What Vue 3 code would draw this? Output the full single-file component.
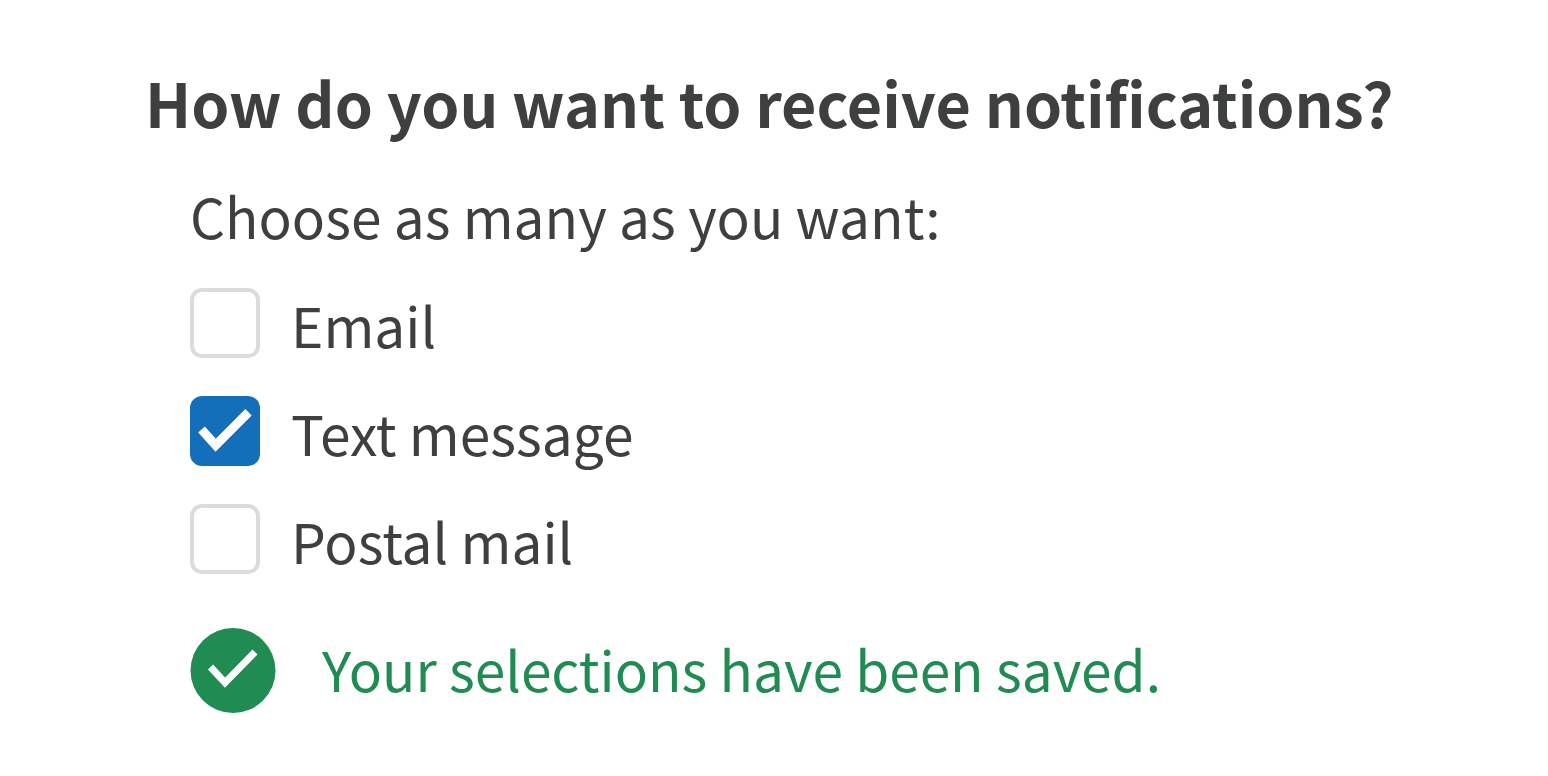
<script setup>
import { ref } from 'vue'

const options = [
  { id: 'email', label: 'Email' },
  { id: 'text', label: 'Text message' },
  { id: 'postal', label: 'Postal mail' },
]
const selected = ref(['text'])
</script>

<template>
  <main class="page">
    <form @submit.prevent>
      <h1 id="question">How do you want to receive notifications?</h1>
      <div class="body" role="group" aria-labelledby="question">
        <p class="hint">Choose as many as you want:</p>
        <ul class="options">
          <li v-for="o in options" :key="o.id" class="option">
            <span class="box">
              <input :id="o.id" v-model="selected" type="checkbox" :value="o.id" />
              <svg class="tick" viewBox="0 0 70 70" aria-hidden="true">
                <path d="M11.500 33.500 L25.700 49.200 L58.500 16.300" />
              </svg>
            </span>
            <label :for="o.id">{{ o.label }}</label>
          </li>
        </ul>
        <div class="status" role="status">
          <svg class="badge" viewBox="0 0 86 86" aria-hidden="true">
            <circle cx="43" cy="42.500" r="42.500" />
            <path d="M20.500 39 L35 54.600 L65 24" />
          </svg>
          <span>Your selections have been saved.</span>
        </div>
      </div>
    </form>
  </main>
</template>

<style>
body {
  background: #fff;
}
</style>

<style scoped>
.page {
  padding: 54px 145px 56px 145px;
  color: #3e3f3f;
  font-family: 'Noto Sans CJK SC', 'Noto Sans', sans-serif;
}
h1 {
  margin: 0;
  font-size: 61px;
  line-height: 96px;
  font-weight: 700;
}
.body {
  padding-left: 45px;
  font-size: 55px;
  line-height: 72px;
}
.hint {
  margin: 29px 0 37px;
}
.options {
  display: flex;
  flex-direction: column;
  gap: 36px;
  margin: 0;
  padding: 0;
  list-style: none;
}
.option {
  display: flex;
  gap: 31px;
}
.box {
  position: relative;
  flex: none;
  width: 70px;
  height: 70px;
}
input {
  display: block;
  appearance: none;
  box-sizing: border-box;
  width: 70px;
  height: 70px;
  margin: 0;
  border: 4px solid #dbdbdb;
  border-radius: 12px;
  background: #fff;
}
input:checked {
  border-color: #136fb9;
  background: #136fb9;
}
.tick {
  position: absolute;
  inset: 0;
  display: none;
  pointer-events: none;
}
input:checked + .tick {
  display: block;
}
path {
  fill: none;
  stroke: #fff;
  stroke-width: 9;
}
.status {
  display: flex;
  align-items: center;
  gap: 46px;
  margin-top: 52px;
  color: #208c51;
}
.status span {
  padding-bottom: 6px;
}
.badge {
  flex: none;
  width: 86px;
  height: 86px;
}
.badge circle {
  fill: #208c51;
}
.badge path {
  stroke-width: 7;
}
</style>
